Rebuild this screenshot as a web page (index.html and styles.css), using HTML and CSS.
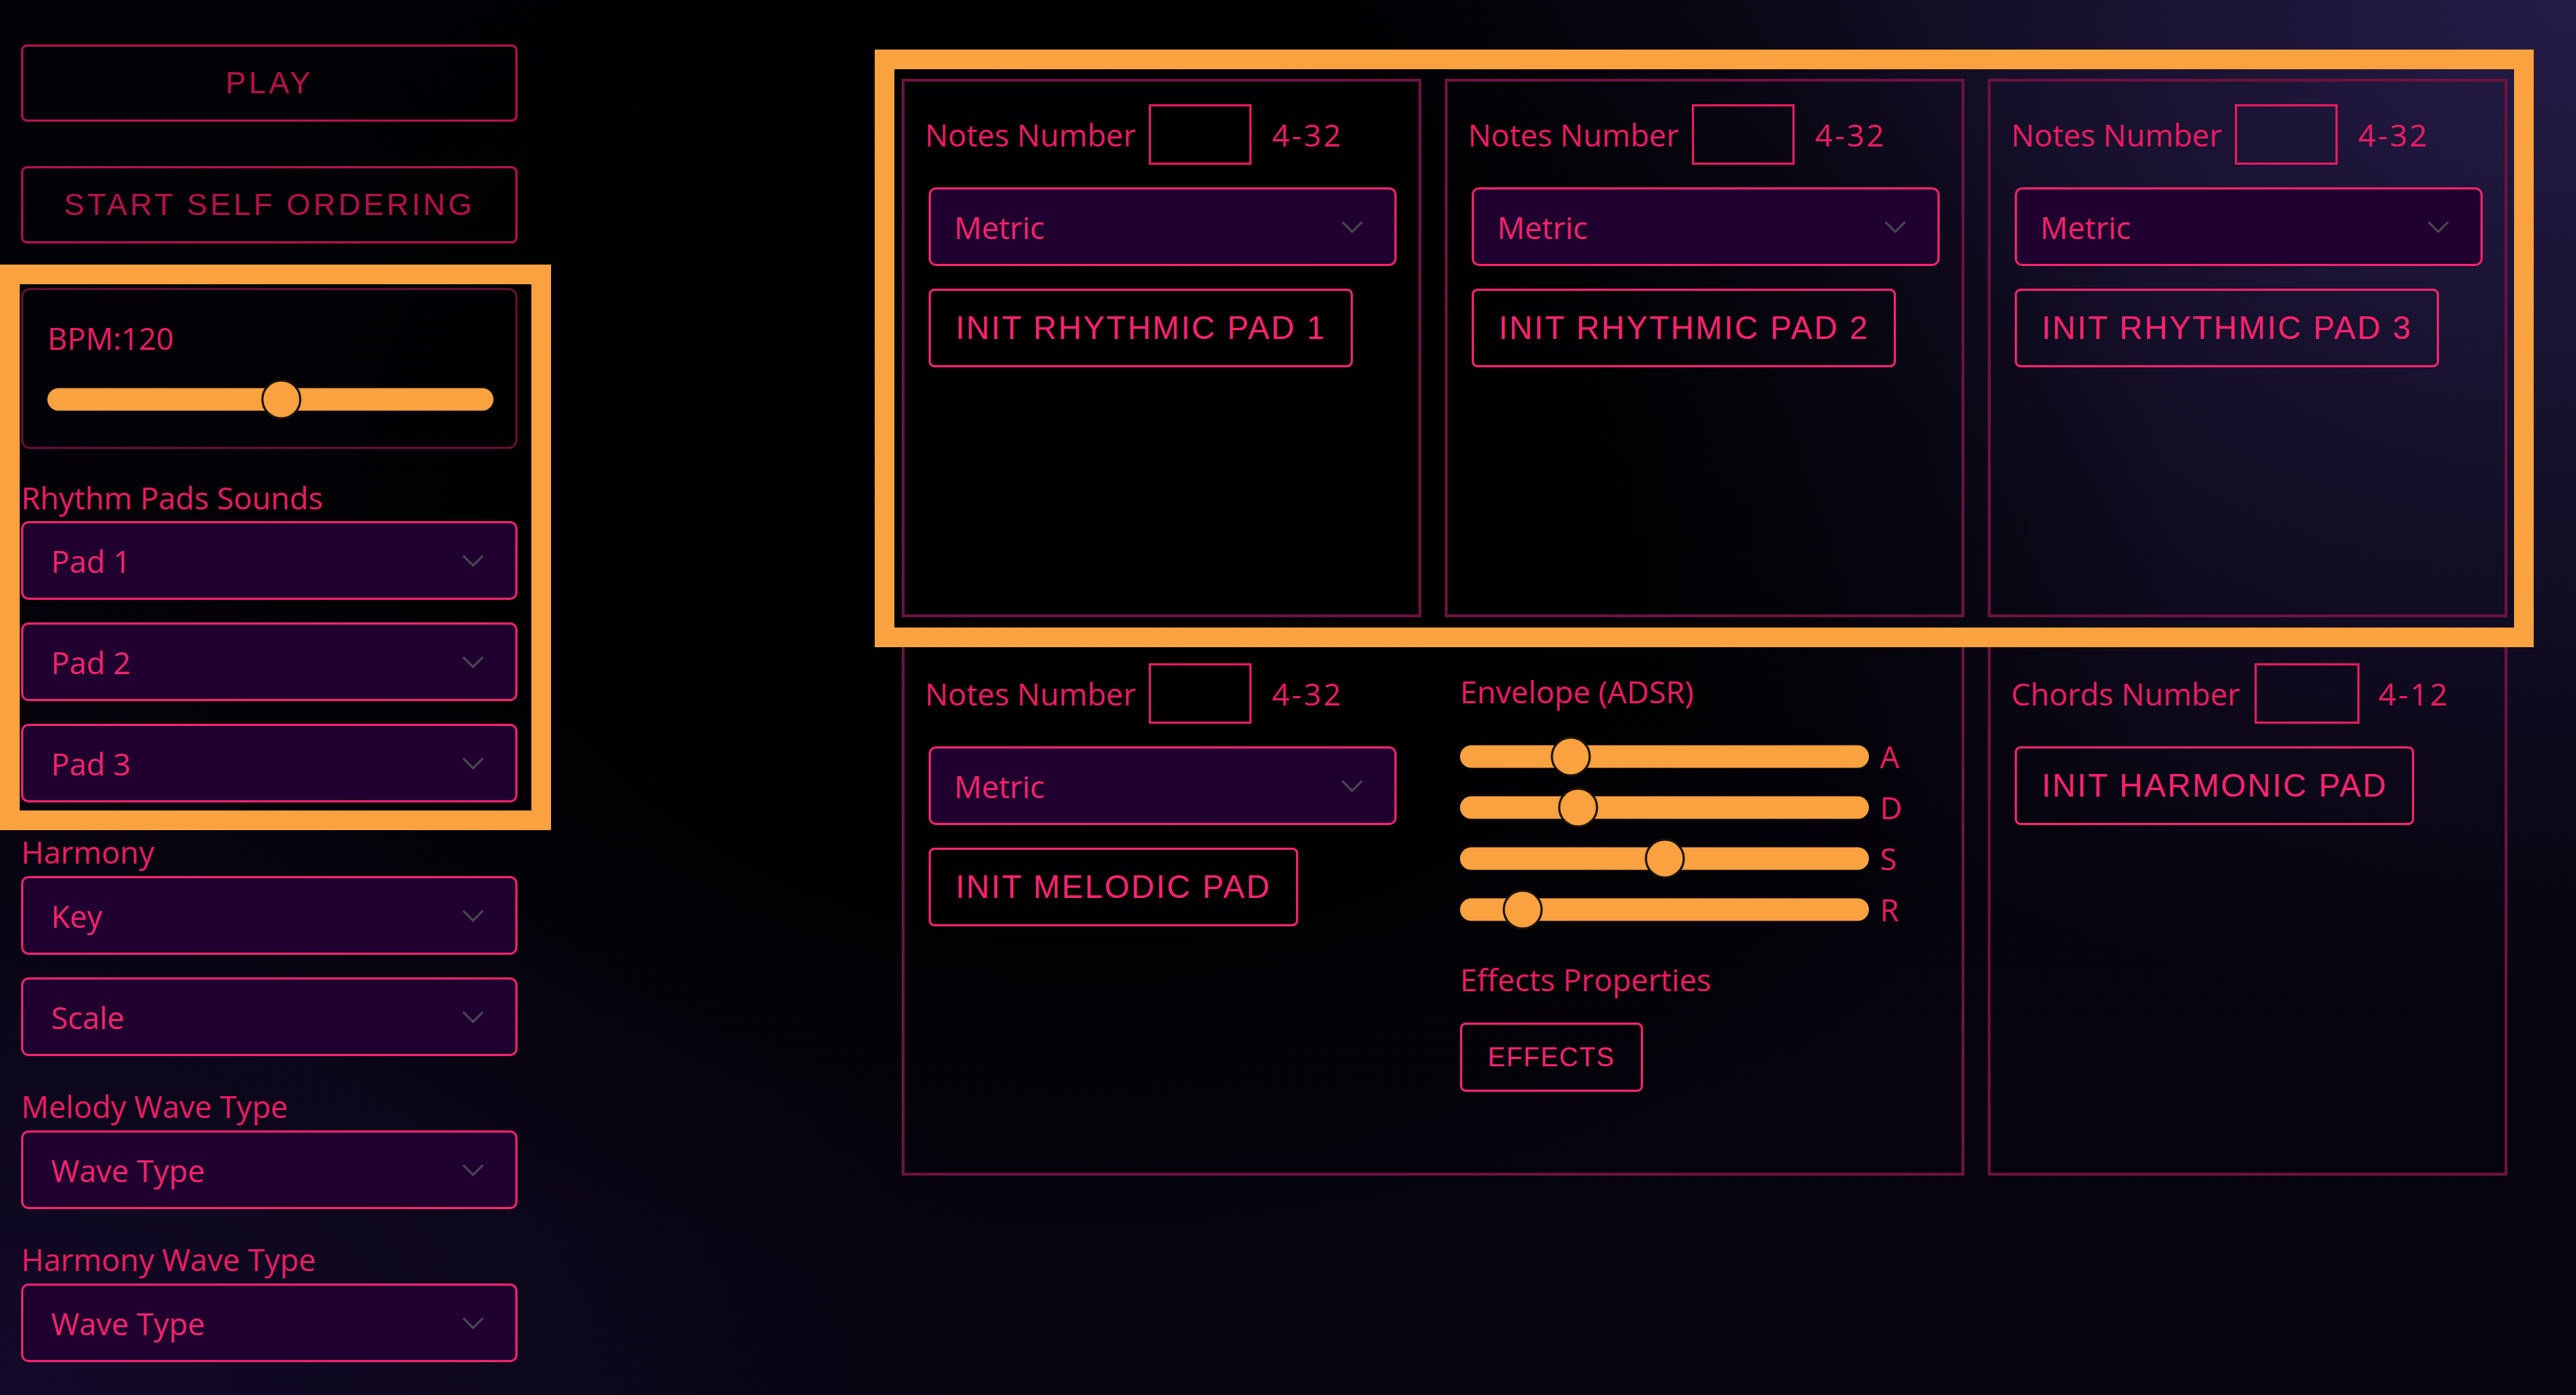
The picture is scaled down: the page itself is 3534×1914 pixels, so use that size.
FILE: index.html
```html
<!DOCTYPE html>
<html lang="en">
<head>
<meta charset="utf-8">
<title>Rhythm Pads</title>
<link rel="stylesheet" href="styles.css">
</head>
<body>
<div class="app">
  <aside class="sidebar">
    <button class="btn-main">PLAY</button>
    <button class="btn-main btn-second">START SELF ORDERING</button>

    <div class="focus-wrap">
      <div class="focus-stack">
        <div class="bpm-box">
          <div class="label">BPM:120</div>
          <div class="slider bpm-slider">
            <div class="track"></div>
            <div class="thumb" style="left:52.4%"></div>
          </div>
        </div>
        <div class="label label-rhythm">Rhythm Pads Sounds</div>
        <div class="select side-select"><span>Pad 1</span><svg class="chev" viewBox="0 0 30 17"><polyline points="1.5,1.5 15,15 28.5,1.5"/></svg></div>
        <div class="select side-select gap-select"><span>Pad 2</span><svg class="chev" viewBox="0 0 30 17"><polyline points="1.5,1.5 15,15 28.5,1.5"/></svg></div>
        <div class="select side-select gap-select"><span>Pad 3</span><svg class="chev" viewBox="0 0 30 17"><polyline points="1.5,1.5 15,15 28.5,1.5"/></svg></div>
      </div>
      <div class="highlight highlight-side"></div>
    </div>

    <div class="label side-label first-label">Harmony</div>
    <div class="select side-select"><span>Key</span><svg class="chev" viewBox="0 0 30 17"><polyline points="1.5,1.5 15,15 28.5,1.5"/></svg></div>
    <div class="select side-select gap-select"><span>Scale</span><svg class="chev" viewBox="0 0 30 17"><polyline points="1.5,1.5 15,15 28.5,1.5"/></svg></div>

    <div class="label side-label">Melody Wave Type</div>
    <div class="select side-select"><span>Wave Type</span><svg class="chev" viewBox="0 0 30 17"><polyline points="1.5,1.5 15,15 28.5,1.5"/></svg></div>

    <div class="label side-label">Harmony Wave Type</div>
    <div class="select side-select"><span>Wave Type</span><svg class="chev" viewBox="0 0 30 17"><polyline points="1.5,1.5 15,15 28.5,1.5"/></svg></div>
  </aside>

  <main class="pads">
    <section class="panel pad-1">
      <div class="field-row">
        <span class="label">Notes Number</span>
        <span class="num-input"></span>
        <span class="range">4-32</span>
      </div>
      <div class="select panel-select"><span>Metric</span><svg class="chev" viewBox="0 0 30 17"><polyline points="1.5,1.5 15,15 28.5,1.5"/></svg></div>
      <button class="btn-init">INIT RHYTHMIC PAD 1</button>
    </section>

    <section class="panel pad-2">
      <div class="field-row">
        <span class="label">Notes Number</span>
        <span class="num-input"></span>
        <span class="range">4-32</span>
      </div>
      <div class="select panel-select"><span>Metric</span><svg class="chev" viewBox="0 0 30 17"><polyline points="1.5,1.5 15,15 28.5,1.5"/></svg></div>
      <button class="btn-init">INIT RHYTHMIC PAD 2</button>
    </section>

    <section class="panel pad-3">
      <div class="field-row">
        <span class="label">Notes Number</span>
        <span class="num-input"></span>
        <span class="range">4-32</span>
      </div>
      <div class="select panel-select"><span>Metric</span><svg class="chev" viewBox="0 0 30 17"><polyline points="1.5,1.5 15,15 28.5,1.5"/></svg></div>
      <button class="btn-init">INIT RHYTHMIC PAD 3</button>
    </section>

    <section class="panel panel-melodic">
      <div class="melodic-main">
        <div class="field-row">
          <span class="label">Notes Number</span>
          <span class="num-input"></span>
          <span class="range">4-32</span>
        </div>
        <div class="select panel-select"><span>Metric</span><svg class="chev" viewBox="0 0 30 17"><polyline points="1.5,1.5 15,15 28.5,1.5"/></svg></div>
        <button class="btn-init">INIT MELODIC PAD</button>
      </div>
      <div class="envelope">
        <div class="label env-title">Envelope (ADSR)</div>
        <div class="adsr">
          <div class="adsr-row">
            <div class="slider env-slider"><div class="track"></div><div class="thumb" style="left:27.1%"></div></div>
            <span class="adsr-key">A</span>
          </div>
          <div class="adsr-row">
            <div class="slider env-slider"><div class="track"></div><div class="thumb" style="left:28.9%"></div></div>
            <span class="adsr-key">D</span>
          </div>
          <div class="adsr-row">
            <div class="slider env-slider"><div class="track"></div><div class="thumb" style="left:50.1%"></div></div>
            <span class="adsr-key">S</span>
          </div>
          <div class="adsr-row">
            <div class="slider env-slider"><div class="track"></div><div class="thumb" style="left:15.3%"></div></div>
            <span class="adsr-key">R</span>
          </div>
        </div>
        <div class="label fx-title">Effects Properties</div>
        <button class="btn-init btn-effects">EFFECTS</button>
      </div>
    </section>

    <section class="panel panel-harmonic">
      <div class="field-row">
        <span class="label">Chords Number</span>
        <span class="num-input num-wide"></span>
        <span class="range">4-12</span>
      </div>
      <button class="btn-init">INIT HARMONIC PAD</button>
    </section>

    <div class="highlight highlight-top"></div>
  </main>
</div>
</body>
</html>
```

FILE: styles.css
```css
* {
  box-sizing: border-box;
  margin: 0;
  padding: 0;
}

html,
body {
  width: 3534px;
  height: 1914px;
  overflow: hidden;
}

body {
  font-family: "Open Sans", "Noto Sans", sans-serif;
  color: #ec1c64;
  background:
    radial-gradient(ellipse 1500px 1100px at 1500px 700px, #000 0%, rgba(0, 0, 0, 0.85) 45%, rgba(0, 0, 0, 0) 100%),
    radial-gradient(ellipse 1700px 1400px at 3534px 0px, #251c48 0%, rgba(37, 28, 72, 0.55) 45%, rgba(37, 28, 72, 0) 100%),
    radial-gradient(ellipse 1400px 900px at 0px 1914px, #130a2a 0%, rgba(19, 10, 42, 0) 100%),
    linear-gradient(180deg, #020106 0%, #07040f 100%);
}

.app {
  display: flex;
  align-items: flex-start;
  gap: 527px;
  padding: 61px 0 0 29px;
}

/* ---------- sidebar ---------- */
.sidebar {
  width: 681px;
  display: flex;
  flex-direction: column;
}

.btn-main {
  height: 106px;
  width: 100%;
  border: 3px solid #b0144c;
  border-radius: 8px;
  background: transparent;
  color: #b3124a;
  font-family: "Liberation Sans", Arial, sans-serif;
  font-size: 42px;
  letter-spacing: 4px;
}

.btn-second {
  margin-top: 61px;
}

.focus-wrap {
  display: grid;
  margin-top: 61px;
}

.focus-stack {
  grid-area: 1 / 1;
  display: flex;
  flex-direction: column;
}

.highlight {
  border: 27px solid #f9a23f;
  pointer-events: none;
  z-index: 2;
}

.highlight-side {
  grid-area: 1 / 1;
  margin: -32px -46px -38px -29px;
}

.label {
  font-size: 42px;
  line-height: 57px;
  white-space: nowrap;
}

.bpm-box {
  border: 3px solid #621034;
  border-radius: 12px;
  padding: 37px 30px 38px 33px;
}

.slider {
  position: relative;
  height: 54px;
}

.track {
  position: absolute;
  left: 0;
  right: 0;
  top: 50%;
  height: 31px;
  transform: translateY(-50%);
  border-radius: 16px;
  background: #f9a23f;
}

.thumb {
  position: absolute;
  top: 50%;
  width: 55px;
  height: 55px;
  border-radius: 50%;
  background: #f9a23f;
  border: 3px solid #1b130c;
  transform: translate(-50%, -50%);
}

.bpm-slider {
  margin-top: 29px;
}

.label-rhythm {
  margin-top: 38px;
  margin-bottom: 4px;
}

.select {
  display: flex;
  align-items: center;
  height: 108px;
  border: 3px solid #f5246e;
  border-radius: 10px;
  background: #1f002e;
  color: #f5246e;
  font-size: 42px;
}

.side-select {
  padding-left: 38px;
  padding-right: 43px;
}

.gap-select {
  margin-top: 31px;
}

.chev {
  margin-left: auto;
  width: 30px;
  height: 17px;
  fill: none;
  stroke: #4a4753;
  stroke-width: 3;
}

.side-label {
  margin-top: 40px;
  margin-bottom: 5px;
}

.first-label {
  margin-top: 39px;
}

/* ---------- pads ---------- */
.pads {
  display: grid;
  grid-template-columns: repeat(3, 713px);
  grid-template-rows: 739px 738px;
  column-gap: 32px;
  row-gap: 28px;
  margin-top: 47px;
}

.panel {
  border: 4px solid #6c1240;
  padding: 31px 30px 0 33px;
  display: flex;
  flex-direction: column;
  align-items: flex-start;
}

.pad-1 {
  grid-row: 1;
  grid-column: 1;
}

.pad-2 {
  grid-row: 1;
  grid-column: 2;
}

.pad-3 {
  grid-row: 1;
  grid-column: 3;
}

.field-row {
  display: flex;
  align-items: center;
  height: 83px;
  margin-left: -5px;
}

.num-input {
  width: 141px;
  height: 83px;
  border: 3px solid #e81a60;
  margin: 0 28px 0 18px;
}

.num-wide {
  width: 144px;
  margin-left: 20px;
  margin-right: 26px;
}

.range {
  font-size: 42px;
  letter-spacing: 3px;
}

.panel-select {
  width: 642px;
  margin-top: 31px;
  padding-left: 32px;
  padding-right: 43px;
}

.btn-init {
  margin-top: 31px;
  height: 108px;
  padding: 0 34px;
  border: 3px solid #f5246e;
  border-radius: 8px;
  background: transparent;
  color: #ff2470;
  font-family: "Liberation Sans", Arial, sans-serif;
  font-size: 44px;
  letter-spacing: 2.4px;
  white-space: nowrap;
}

.panel-melodic {
  grid-row: 2;
  grid-column: 1 / 3;
  flex-direction: row;
  gap: 87px;
}

.panel-harmonic {
  grid-row: 2;
  grid-column: 3;
}

.melodic-main {
  width: 642px;
  display: flex;
  flex-direction: column;
  align-items: flex-start;
}

.envelope {
  display: flex;
  flex-direction: column;
  align-items: flex-start;
}

.env-title {
  margin-top: 10px;
}

.adsr {
  margin-top: 34px;
  display: flex;
  flex-direction: column;
  gap: 16px;
}

.adsr-row {
  display: flex;
  align-items: center;
}

.env-slider {
  width: 561px;
}

.adsr-key {
  margin-left: 15px;
  font-size: 42px;
  line-height: 54px;
}

.fx-title {
  margin-top: 40px;
}

.btn-effects {
  height: 95px;
  font-size: 36px;
  letter-spacing: 1.5px;
  padding: 0 35px;
}

.highlight-top {
  grid-row: 1;
  grid-column: 1 / -1;
  margin: -40px -36px -41px -37px;
}
```
